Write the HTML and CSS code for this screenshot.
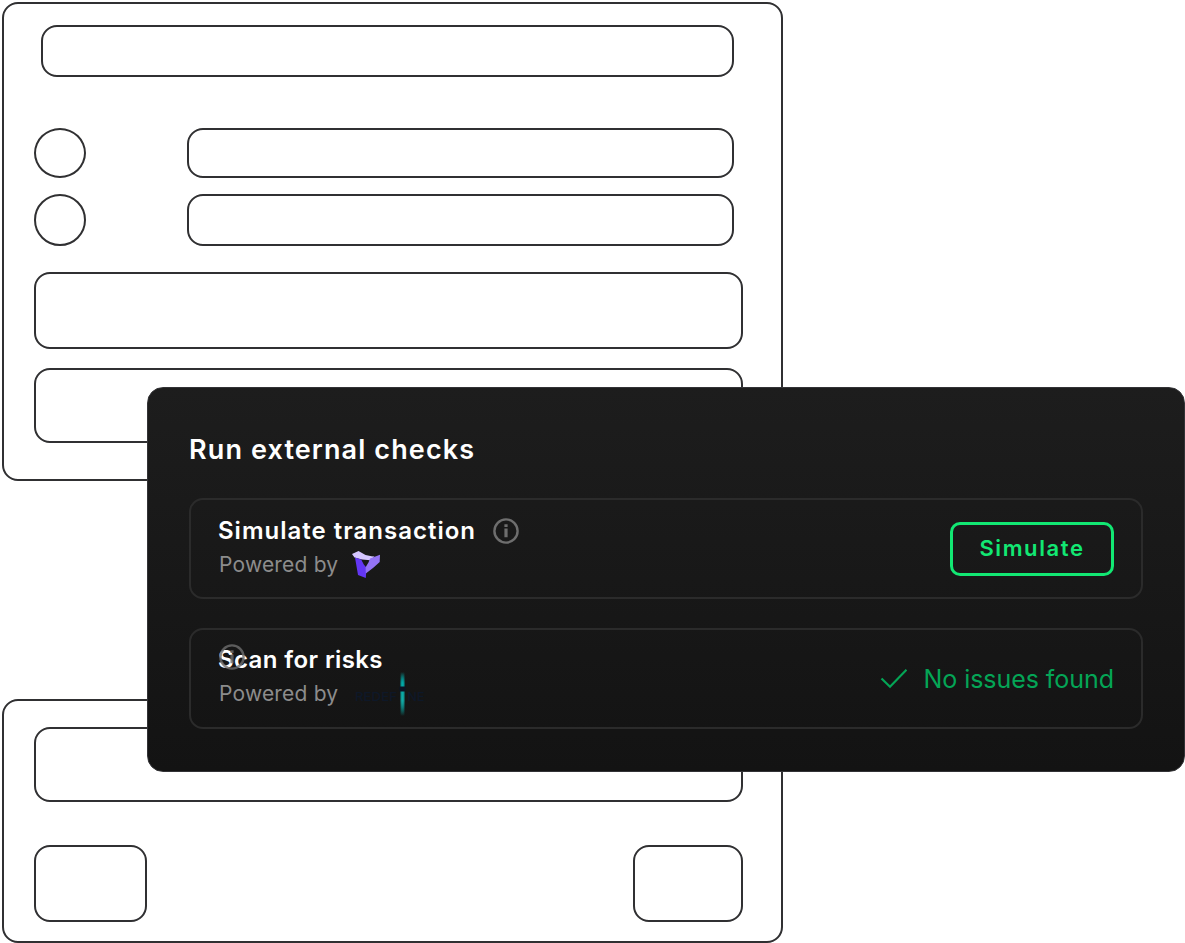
FILE: index.html
```html
<!DOCTYPE html>
<html lang="en">
<head>
<meta charset="utf-8">
<title>Run external checks</title>
<link rel="stylesheet" href="styles.css">
</head>
<body>
<main class="stage">
  <section class="panel panel-top">
    <div class="outline search"></div>
    <div class="row row-first"><div class="outline dot"></div><div class="outline field"></div></div>
    <div class="row row-second"><div class="outline dot"></div><div class="outline field"></div></div>
    <div class="outline block block-first"></div>
    <div class="outline block block-second"></div>
  </section>
  <section class="panel panel-bottom">
    <div class="outline block block-third"></div>
    <div class="actions"><div class="outline action-left"></div><div class="outline action-right"></div></div>
  </section>

  <section class="card">
    <h1 class="title">Run external checks</h1>
    <div class="check check-simulate">
      <div class="info">
        <div class="name-line">
          <h2 class="name name-simulate">Simulate transaction</h2>
          <svg class="info-icon" width="26" height="26" viewBox="0 0 26 26" fill="none" stroke="#6e6e6e" stroke-width="2.4"><circle cx="13" cy="13" r="11.6"/><path d="M13 10.500v8.700M13 6.300v2.800" stroke-width="3.200"/></svg>
        </div>
        <div class="powered"><span class="powered-text">Powered by</span>
          <svg class="tenderly" width="28" height="28" viewBox="0 0 28 28"><path d="M0 3 6.500 0l7 4 6 1.200 3 .3-4 3.700-8.500-.7L2.500 6.500z" fill="#d5c6ff"/><path d="m3 6.500 6.200 2 2.600 5 2.700 3.200-.7 10.300-7.800-3z" fill="#6336f4"/><path d="m18 7.500 10-3.800-.3 7.300-6.400 5.700-7.500 5.800-.2-6.200 3-5z" fill="#9473f5"/></svg>
        </div>
      </div>
      <button class="simulate" type="button">Simulate</button>
    </div>
    <div class="check check-scan">
      <div class="info">
        <div class="name-line">
          <h2 class="name name-scan">Scan for risks</h2>
          <svg class="info-icon info-over" width="26" height="26" viewBox="0 0 26 26" fill="none" stroke="#6e6e6e" stroke-opacity=".8" stroke-width="2.4"><circle cx="13" cy="13" r="11.6"/><path d="M13 10.500v8.700M13 6.300v2.800" stroke-width="3.200"/></svg>
        </div>
        <div class="powered"><span class="powered-text">Powered by</span>
          <svg class="redefine" width="74" height="44" viewBox="0 0 74 44">
            <defs><linearGradient id="beam" x1="0" y1="0" x2="0" y2="1"><stop offset="0" stop-color="#00b9b5" stop-opacity="0"/><stop offset=".25" stop-color="#00a9a8"/><stop offset=".65" stop-color="#12aaa5"/><stop offset="1" stop-color="#00b9b5" stop-opacity="0"/></linearGradient></defs>
            <text x="1" y="28.500" class="redefine-text" textLength="42" lengthAdjust="spacingAndGlyphs">REDEF</text>
            <text x="53.500" y="28.500" class="redefine-text" textLength="17" lengthAdjust="spacingAndGlyphs">NE</text>
            <rect x="46" y="0" width="5" height="44" fill="url(#beam)" opacity=".45"/>
            <rect x="47.200" y="0" width="2.600" height="44" fill="url(#beam)"/>
            <rect x="45.500" y="14.500" width="6" height="5" fill="#0b1424"/>
          </svg>
        </div>
      </div>
      <div class="result">
        <svg width="28" height="22" viewBox="0 0 28 22" fill="none" stroke="#04a556" stroke-width="2.200"><path d="m2.500 10.500 8.500 8.300L27.500 1.800"/></svg>
        <span class="result-text">No issues found</span>
      </div>
    </div>
  </section>
</main>
</body>
</html>
```
FILE: styles.css
```css
* { box-sizing: border-box; }
body { margin: 0; background: #fff; font-family: Inter, "Open Sans", sans-serif; }
.stage { position: relative; width: 1185px; height: 943px; overflow: hidden; padding: 2px 0 0 2px; }
.panel, .outline { border: 2px solid #303032; border-radius: 16px; }
.panel { width: 781px; }
.panel-top { height: 479px; padding: 21px 0 0 30px; }
.search { width: 693px; height: 52px; margin-left: 7px; }
.row { display: flex; justify-content: space-between; width: 700px; }
.row-first { height: 50px; margin-top: 51px; }
.row-second { height: 52px; margin-top: 16px; }
.dot { width: 52px; border-radius: 50%; }
.field { width: 547px; }
.block { width: 709px; }
.block-first { height: 77px; margin-top: 26px; }
.block-second { height: 75px; margin-top: 19px; }
.panel-bottom { height: 244px; margin-top: 218px; padding: 26px 0 0 30px; }
.block-third { height: 75px; }
.actions { display: flex; justify-content: space-between; width: 709px; height: 77px; margin-top: 43px; }
.action-left { width: 113px; }
.action-right { width: 110px; }

.card { position: absolute; left: 147px; top: 387px; width: 1038px; height: 385px; padding: 44px 41px 0; border: 1px solid #333336; border-radius: 16px; background: linear-gradient(#1d1d1d, #131313); display: flex; flex-direction: column; }
.title { margin: 0 0 30px; height: 36px; font-size: 27px; line-height: 36px; font-weight: 600; letter-spacing: 1.120px; color: #fff; white-space: nowrap; }
.check { display: flex; justify-content: space-between; align-items: center; width: 954px; height: 101px; margin-bottom: 29px; padding: 0 27px; border: 2px solid #2b2b2b; border-radius: 14px; flex: none; }
.check-simulate .info { height: 75px; }
.check-scan .info { height: 77px; }
.name-line { display: flex; align-items: center; gap: 18px; height: 40px; position: relative; }
.name { margin: 0; font-size: 24px; line-height: 34px; font-weight: 600; color: #fff; white-space: nowrap; letter-spacing: .4px; }
.name-simulate { width: 257px; letter-spacing: 1px; }
.info-over { position: absolute; left: 1px; top: 4px; }
.powered { display: flex; align-items: center; gap: 14px; height: 28px; }
.powered-text { width: 120px; padding-left: 1px; font-size: 21px; line-height: 28px; color: #8c8c8c; letter-spacing: .2px; white-space: nowrap; }
.redefine { margin-left: 2px; }
.redefine-text { font-family: Inter, sans-serif; font-size: 12px; font-weight: 500; fill: #0e1828; }
.simulate { width: 164px; height: 54px; padding: 0 0 2px; border: 3px solid #12e873; border-radius: 10px; background: transparent; color: #12e873; font: 600 22px/46px Inter, sans-serif; letter-spacing: 1.600px; }
.result { display: flex; align-items: center; gap: 16px; }
.result-text { font-size: 25px; line-height: 32px; color: #04a556; letter-spacing: -.050px; white-space: nowrap; }
```
